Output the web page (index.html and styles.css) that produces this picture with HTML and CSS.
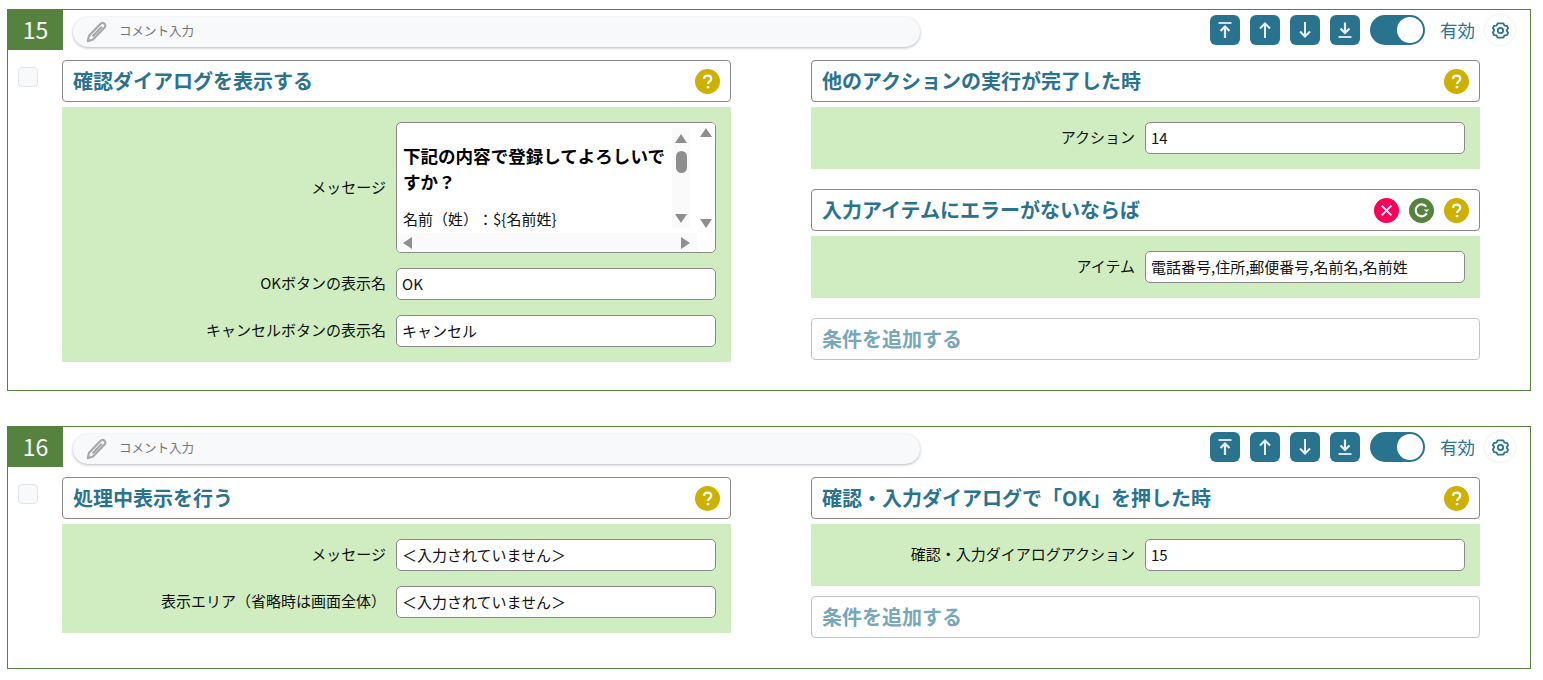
FILE: index.html
```html
<!DOCTYPE html>
<html lang="ja">
<head>
<meta charset="utf-8">
<title>アクション</title>
<link rel="stylesheet" href="styles.css">
</head>
<body>
<svg class="defs" width="0" height="0" aria-hidden="true">
  <symbol id="q" viewBox="0 0 26 26"><circle cx="13" cy="13" r="13" fill="#cdb000"/><path d="M9.2 10.2c.2-2.2 1.800-3.400 3.900-3.400 2.200 0 3.800 1.300 3.800 3.200 0 1.500-.8 2.300-1.900 3.100-1 .7-1.400 1.200-1.400 2.400" fill="none" stroke="#fff" stroke-width="2.300"/><circle cx="13.500" cy="18.800" r="1.500" fill="#fff"/></symbol>
  <symbol id="top" viewBox="0 0 30 30"><path d="M8.500 8h13" fill="none" stroke="#e8eef0" stroke-width="1.800"/><path d="M15 23V12M10.500 16 15 11.500l4.500 4.500" fill="none" stroke="#e8eef0" stroke-width="2.200"/></symbol>
  <symbol id="up" viewBox="0 0 30 30"><path d="M15 23V8.500M10 13.500l5-5 5 5" fill="none" stroke="#e8eef0" stroke-width="2"/></symbol>
  <symbol id="down" viewBox="0 0 30 30"><path d="M15 7v14.500M10 16.500l5 5 5-5" fill="none" stroke="#e8eef0" stroke-width="2"/></symbol>
  <symbol id="bottom" viewBox="0 0 30 30"><path d="M8.500 22h13" fill="none" stroke="#e8eef0" stroke-width="1.800"/><path d="M15 7.500v10M10.500 13.500l4.500 4.500 4.500-4.500" fill="none" stroke="#e8eef0" stroke-width="2.200"/></symbol>
  <symbol id="gear" viewBox="0 0 20 20"><path d="M7 2.500h6l1.200 2.300 2.600.3 1.200 2.400-1.500 2.500 1.500 2.500-1.200 2.400-2.600.3-1.200 2.300H7l-1.200-2.300-2.600-.3L2 12l1.500-2.500L2 7.500l1.200-2.400 2.600-.3z" fill="none" stroke="#2a738f" stroke-width="1.900" stroke-linejoin="round"/><circle cx="10" cy="10" r="2.800" fill="none" stroke="#2a738f" stroke-width="1.900"/></symbol>
  <symbol id="clip" viewBox="0 0 22 22"><path d="M1.800 20.200 3 14.800 14.300 3c1.400-1.400 3.100-1.400 4.200-.3 1.200 1.200 1.100 2.800-.2 4.100L7 18.500z" fill="none" stroke="#a8a8a8" stroke-width="2.200" stroke-linejoin="round"/><path d="M6.500 15.500 15.800 5.800" stroke="#a8a8a8" stroke-width="2.200"/></symbol>
</svg>

<section class="card">
  <header class="card-head">
    <div class="num">15</div>
    <div class="comment"><svg class="clip"><use href="#clip"/></svg><span>コメント入力</span></div>
    <div class="controls">
      <button class="mv"><svg><use href="#top"/></svg></button>
      <button class="mv"><svg><use href="#up"/></svg></button>
      <button class="mv"><svg><use href="#down"/></svg></button>
      <button class="mv"><svg><use href="#bottom"/></svg></button>
      <div class="toggle"><i></i></div>
      <span class="state">有効</span>
      <div class="gear"><svg><use href="#gear"/></svg></div>
    </div>
  </header>
  <div class="card-body body-a">
    <div class="check"></div>
    <div class="col">
      <div class="title"><h2>確認ダイアログを表示する</h2><svg class="ic"><use href="#q"/></svg></div>
      <div class="panel">
        <div class="row row-msg">
          <label>メッセージ</label>
          <div class="msg">
            <div class="msg-main">
              <div class="msg-text">
                <p class="msg-strong">下記の内容で登録してよろしいですか？</p>
                <p class="msg-line">名前（姓）：${名前姓}</p>
              </div>
              <div class="vbar"><b class="up"></b><em></em><b class="dn"></b></div>
            </div>
            <div class="vbar outer"><b class="up"></b><b class="dn"></b></div>
            <div class="hbar"><b class="lf"></b><b class="rt"></b></div>
          </div>
        </div>
        <div class="row"><label>OKボタンの表示名</label><div class="input">OK</div></div>
        <div class="row"><label>キャンセルボタンの表示名</label><div class="input">キャンセル</div></div>
      </div>
    </div>
    <div class="col">
      <div class="title"><h2>他のアクションの実行が完了した時</h2><svg class="ic"><use href="#q"/></svg></div>
      <div class="panel"><div class="row"><label>アクション</label><div class="input">14</div></div></div>
      <div class="title title-gap">
        <h2>入力アイテムにエラーがないならば</h2>
        <svg class="ic" viewBox="0 0 26 26"><circle cx="13" cy="13" r="13" fill="#fb0058"/><path d="M8 8l10 10M18 8 8 18" stroke="#fff" stroke-width="2"/></svg>
        <svg class="ic" viewBox="0 0 26 26"><circle cx="13" cy="13" r="13" fill="#55833f"/><path d="M18 9a6.200 6.200 0 1 0 .5 7" fill="none" stroke="#fff" stroke-width="2.200"/><path d="M15.500 12h5.500l-2.700 2.800z" fill="#fff"/></svg>
        <svg class="ic"><use href="#q"/></svg>
      </div>
      <div class="panel"><div class="row"><label>アイテム</label><div class="input">電話番号,住所,郵便番号,名前名,名前姓</div></div></div>
      <div class="title add add-far"><h2>条件を追加する</h2></div>
    </div>
  </div>
</section>

<section class="card">
  <header class="card-head">
    <div class="num">16</div>
    <div class="comment"><svg class="clip"><use href="#clip"/></svg><span>コメント入力</span></div>
    <div class="controls">
      <button class="mv"><svg><use href="#top"/></svg></button>
      <button class="mv"><svg><use href="#up"/></svg></button>
      <button class="mv"><svg><use href="#down"/></svg></button>
      <button class="mv"><svg><use href="#bottom"/></svg></button>
      <div class="toggle"><i></i></div>
      <span class="state">有効</span>
      <div class="gear"><svg><use href="#gear"/></svg></div>
    </div>
  </header>
  <div class="card-body body-b">
    <div class="check"></div>
    <div class="col">
      <div class="title"><h2>処理中表示を行う</h2><svg class="ic"><use href="#q"/></svg></div>
      <div class="panel">
        <div class="row"><label>メッセージ</label><div class="input">＜入力されていません＞</div></div>
        <div class="row"><label>表示エリア（省略時は画面全体）</label><div class="input">＜入力されていません＞</div></div>
      </div>
    </div>
    <div class="col">
      <div class="title"><h2>確認・入力ダイアログで「OK」を押した時</h2><svg class="ic"><use href="#q"/></svg></div>
      <div class="panel"><div class="row"><label>確認・入力ダイアログアクション</label><div class="input">15</div></div></div>
      <div class="title add add-near"><h2>条件を追加する</h2></div>
    </div>
  </div>
</section>
</body>
</html>
```

FILE: styles.css
```css
* { box-sizing: border-box; }
html, body { margin: 0; padding: 0; background: #fff; }
body {
  padding: 9px 12px 0 7px;
  font-family: "Noto Sans CJK JP", "Noto Sans", sans-serif;
  font-size: 15px;
  color: #111;
  overflow: hidden;
}
.defs { display: block; height: 0; }
.card { width: 1524px; border: 1px solid #55833f; margin-bottom: 35px; }
.card-head { display: flex; align-items: flex-start; height: 40px; }
.num {
  width: 55px; height: 40px; background: #55833f; color: #fff;
  font-size: 23px; line-height: 39px; text-align: center;
}
.comment {
  width: 847px; height: 30px; margin: 7px 0 0 10px;
  background: #f8f9fb; border-radius: 15px;
  box-shadow: 0 1px 3px rgba(40, 50, 70, .35);
  display: flex; align-items: center; padding-left: 13px;
  font-size: 12.500px; line-height: 28px; color: #757575;
}
.comment span { margin-bottom: 2px; }
.clip { width: 22px; height: 22px; margin-right: 11px; }
.controls { display: flex; align-items: center; margin: 5px 0 0 290px; height: 30px; }
.mv {
  width: 30px; height: 30px; padding: 0; border: 0; margin-right: 10px;
  background: #2a738f; border-radius: 6px;
}
.mv svg { display: block; width: 30px; height: 30px; }
.toggle {
  width: 55px; height: 30px; border-radius: 15px; background: #2a738f;
  display: flex; justify-content: flex-end; padding: 2px;
}
.toggle i { width: 26px; height: 26px; border-radius: 50%; background: #fff; }
.state { margin-left: 15px; width: 35px; font-size: 17.500px; color: #2a738f; line-height: 30px; }
.gear {
  width: 30px; height: 30px; margin-left: 10px; border-radius: 50%; background: #fff;
  box-shadow: 0 0 3px rgba(40, 50, 70, .14);
  display: flex; align-items: center; justify-content: center;
}
.gear svg { width: 19px; height: 19px; }
.card-body { display: grid; grid-template-columns: 20px 693px 749px; padding-left: 10px; margin-top: 10px; }
.body-a { height: 330px; }
.body-b { height: 191px; }
.check {
  width: 20px; height: 20px; margin-top: 7px;
  background: #f8f9fb; border: 1px solid #e2e5ec; border-radius: 4px;
}
.col { margin-left: 24px; }
.col + .col { margin-left: 80px; }
.title {
  height: 42px; border: 1px solid #8a8a8a; border-radius: 4px; background: #fff;
  display: flex; align-items: center; gap: 10px; padding: 0 10px;
}
.title h2 {
  margin: 0 auto 0 0; font-size: 20px; font-weight: 700; color: #2a738f; line-height: 40px;
}
.ic { width: 25px; height: 25px; flex: none; }
.title-gap { margin-top: 20px; }
.add { border-color: #c4c4c4; }
.add h2 { color: #78a7b9; }
.add-far { margin-top: 20px; }
.add-near { margin-top: 10px; }
.panel {
  margin-top: 5px; background: #cfedc0; padding: 15px 15px 15px 0;
  display: flex; flex-direction: column; gap: 15px;
}
.row { display: flex; align-items: center; }
.row label { flex: 1; text-align: right; padding-right: 10px; font-size: 15px; line-height: 20px; margin-top: -2px; }
.input {
  width: 320px; height: 32px; flex: none; background: #fff;
  border: 1px solid #8a8a8a; border-radius: 5px;
  padding: 0 5px; font-size: 15px; line-height: 29px; color: #111;
}
.msg {
  width: 320px; height: 131px; flex: none; background: #fff; overflow: hidden;
  border: 1px solid #8a8a8a; border-radius: 5px;
  display: grid; grid-template-columns: 300px 18px; grid-template-rows: 110px 19px;
}
.msg-main { display: flex; overflow: hidden; }
.msg-text { width: 275px; flex: none; padding: 0 0 0 6px; margin-right: 0; }
.msg-strong { margin: 20px 0 0; font-size: 17.550px; font-weight: 700; line-height: 26px; color: #000; }
.msg-line { margin: 12px 0 0; font-size: 15px; line-height: 24px; color: #111; text-spacing-trim: space-all; }
.vbar {
  width: 18px; margin-top: 5px; height: 100px; flex: none; background: #fafafa;
  display: flex; flex-direction: column; align-items: center; padding: 6px 0 5px;
}
.vbar em { width: 11px; height: 22px; margin-top: 8px; background: #8e8e8e; border-radius: 6px; }
.vbar b { display: block; width: 0; height: 0; border-left: 6.500px solid transparent; border-right: 6.500px solid transparent; }
.vbar .up { border-bottom: 9px solid #8e8e8e; }
.vbar .dn { margin-top: auto; border-top: 9px solid #8e8e8e; }
.outer { background: #fff; margin-top: 0; height: 110px; padding: 5px 0 5px; }
.hbar {
  grid-column: 1 / 2; background: #fafafa; display: flex; justify-content: space-between;
  align-items: center; padding: 0 7px 0 6px;
}
.hbar b { display: block; width: 0; height: 0; border-top: 6.500px solid transparent; border-bottom: 6.500px solid transparent; }
.hbar .lf { border-right: 9px solid #8e8e8e; }
.hbar .rt { border-left: 9px solid #8e8e8e; }
```
